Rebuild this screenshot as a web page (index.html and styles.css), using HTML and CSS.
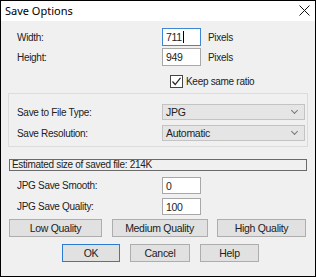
FILE: index.html
```html
<!DOCTYPE html>
<html lang="en">
<head>
    <meta charset="UTF-8">
    <title>Save Options</title>
    <link rel="stylesheet" href="styles.css">
</head>
<body>
    <div class="dialog">
        <div class="titlebar">
            <span class="title">Save Options</span>
            <svg class="close" width="11" height="11" viewBox="0 0 11 11">
                <path d="M0.5 0.5 L10.5 10.5 M10.5 0.5 L0.5 10.5" stroke="#111" stroke-width="1" fill="none" />
            </svg>
        </div>
        <div class="content">
            <div class="row size-row">
                <label class="label">Width:</label>
                <div class="edit focused">711<span class="caret"></span></div>
                <span class="unit">Pixels</span>
            </div>
            <div class="row size-row second">
                <label class="label">Height:</label>
                <div class="edit">949</div>
                <span class="unit">Pixels</span>
            </div>
            <div class="row check-row">
                <span class="checkbox">
                    <svg width="11" height="11" viewBox="0 0 11 11">
                        <path d="M1.5 5.5 L4.2 8.5 L9.5 1.8" stroke="#222" stroke-width="1.2" fill="none" />
                    </svg>
                </span>
                <span class="check-label">Keep same ratio</span>
            </div>

            <div class="group">
                <div class="row select-row">
                    <label class="label">Save to File Type:</label>
                    <div class="combo">JPG<span class="chev"></span></div>
                </div>
                <div class="row select-row second">
                    <label class="label">Save Resolution:</label>
                    <div class="combo">Automatic<span class="chev"></span></div>
                </div>
            </div>

            <div class="estimate">Estimated size of saved file: 214K</div>

            <div class="row jpg-row">
                <label class="label">JPG Save Smooth:</label>
                <div class="edit">0</div>
            </div>
            <div class="row jpg-row second">
                <label class="label">JPG Save Quality:</label>
                <div class="edit">100</div>
            </div>

            <div class="quality-buttons">
                <button class="btn low">Low Quality</button>
                <button class="btn medium">Medium Quality</button>
                <button class="btn high">High Quality</button>
            </div>

            <div class="action-buttons">
                <button class="btn ok">OK</button>
                <button class="btn cancel">Cancel</button>
                <button class="btn help">Help</button>
            </div>
        </div>
    </div>
</body>
</html>
```

FILE: styles.css
```css
* {
    box-sizing: border-box;
}

body {
    margin: 0;
    font-family: "Liberation Sans", Arial, sans-serif;
    font-size: 10px;
    letter-spacing: -0.3px;
    color: #222;
}

.dialog {
    width: 316px;
    height: 277px;
    border: 1px solid #000;
    background: #f0f0f0;
}

.titlebar {
    height: 20px;
    background: #fff;
    display: flex;
    align-items: center;
    justify-content: space-between;
    padding: 0 4px 1px 4px;
}

.title {
    font-family: "Noto Sans", sans-serif;
    font-size: 11px;
    letter-spacing: 0;
    color: #000;
}

.close {
    margin-right: 1px;
}

.content {
    padding: 7px 8px 0 8px;
}

.row {
    display: flex;
    align-items: center;
}

.label {
    width: 145px;
    margin-left: 8px;
    flex-shrink: 0;
}

.edit {
    width: 39px;
    height: 18px;
    background: #fff;
    border: 1px solid #a8a8a8;
    padding: 0 3px;
    line-height: 16px;
    font-size: 10.5px;
    display: flex;
    align-items: center;
}

.edit.focused {
    border-color: #3c86d3;
}

.caret {
    width: 1px;
    height: 12px;
    background: #000;
    margin-left: 1px;
}

.unit {
    margin-left: 7px;
}

.size-row.second {
    margin-top: 2px;
}

.check-row {
    margin-top: 8px;
    height: 14px;
    padding-left: 161px;
}

.checkbox {
    width: 13px;
    height: 13px;
    border: 1px solid #444;
    background: #fff;
    display: flex;
    align-items: center;
    justify-content: center;
}

.check-label {
    margin-left: 3px;
}

.group {
    margin: 5px -1px 0 -1px;
    height: 54px;
    border: 1px solid #dcdcdc;
    padding: 10px 2px 0 0;
}

.group .label {
    margin-left: 8px;
}

.combo {
    flex: 1;
    height: 16px;
    background: #e5e5e5;
    border: 1px solid #c3c3c3;
    padding: 0 3px;
    display: flex;
    align-items: center;
    justify-content: space-between;
    font-size: 10.5px;
}

.chev {
    width: 5px;
    height: 5px;
    border-right: 1px solid #777;
    border-bottom: 1px solid #777;
    transform: rotate(45deg);
    margin: 0 4px 3px 0;
}

.select-row.second {
    margin-top: 5px;
}

.estimate {
    margin-top: 12px;
    height: 12px;
    border: 1px solid #6a6a6a;
    line-height: 10px;
    padding-left: 2px;
}

.jpg-row {
    margin-top: 6px;
}

.jpg-row .edit {
    height: 17px;
}

.jpg-row.second {
    margin-top: 4px;
}

.btn {
    font-family: "Liberation Sans", Arial, sans-serif;
    font-size: 10.5px;
    letter-spacing: -0.3px;
    color: #222;
    background: #e1e1e1;
    border: 1px solid #adadad;
    padding: 0;
}

.quality-buttons {
    margin-top: 4px;
    display: flex;
    justify-content: space-between;
    padding-right: 1px;
}

.quality-buttons .btn {
    height: 18px;
}

.low {
    width: 93px;
}

.medium {
    width: 96px;
}

.high {
    width: 89px;
}

.action-buttons {
    margin-top: 7px;
    display: flex;
    gap: 10px;
    padding-left: 53px;
}

.action-buttons .btn {
    height: 18px;
}

.ok {
    width: 58px;
    border-color: #2b7bd1;
}

.cancel {
    width: 60px;
}

.help {
    width: 59px;
}
```
